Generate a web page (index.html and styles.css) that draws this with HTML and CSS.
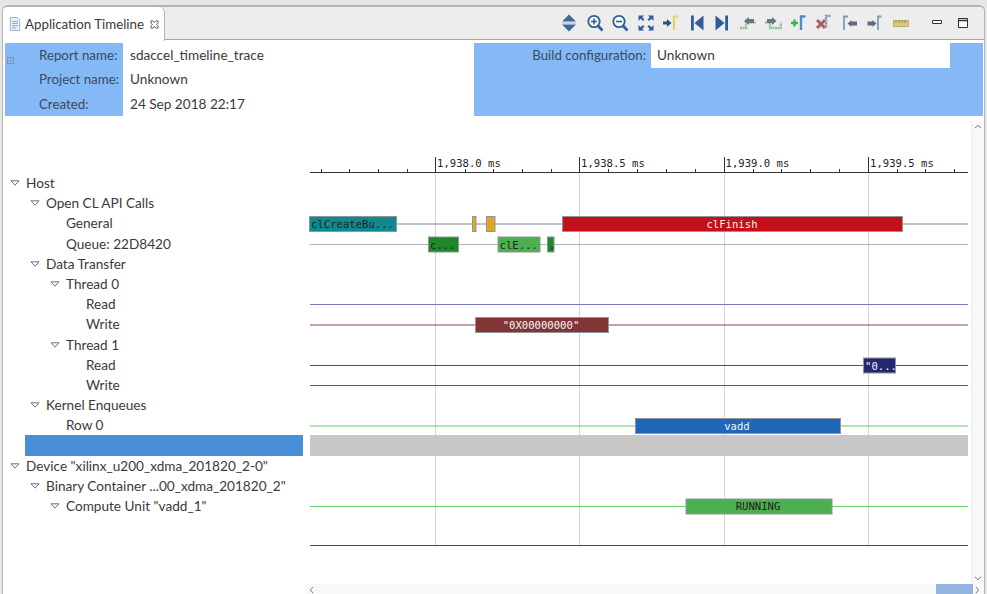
FILE: index.html
```html
<!DOCTYPE html>
<html lang="en">
<head>
  <meta charset="UTF-8">
  <title>Application Timeline</title>
  <meta name="viewport" content="width=device-width, initial-scale=1.0">
  <link rel="stylesheet" href="styles.css">
</head>
<body>
  <svg class="defs" width="0" height="0">
    <symbol id="twisty" viewBox="0 0 10 6">
      <path d="M1 .8H9L5 5.2Z" fill="#fff" stroke="#6f6f6f" stroke-width="1"/>
    </symbol>
  </svg>

  <div class="window">
    <div class="tabbar">
      <div class="tab">
        <svg class="tab-icon" viewBox="0 0 14 16"><path d="M1.5 .5H9.5L12.5 3.5V15.5H1.5Z" fill="#eef2fa" stroke="#8fa3c4"/><path d="M3.5 5H10.5M3.5 7.5H10.5M3.5 10H10.5M3.5 12.5H8.5" stroke="#7f93b8"/></svg>
        <span>Application Timeline</span>
        <svg class="tab-close" viewBox="0 0 10 10"><path d="M1 1H3.5L5 2.8 6.5 1H9V3.5L7.2 5 9 6.5V9H6.5L5 7.2 3.5 9H1V6.5L2.8 5 1 3.5Z" fill="#fff" stroke="#555" stroke-width="1"/></svg>
      </div>
      <div class="toolbar">
        <svg class="tool" viewBox="0 0 18 20"><path d="M9 1.5L16 8.5H2ZM9 18.5L2 11.5H16Z" fill="#41689b"/><path d="M2 10H16" stroke="#a9bbd3"/></svg>
        <svg class="tool" viewBox="0 0 18 20"><circle cx="8" cy="8.5" r="5.7" fill="#f4f7fb" stroke="#2f5d96" stroke-width="1.8"/><path d="M12.2 13L16.5 17.5" stroke="#2f5d96" stroke-width="2.6"/><path d="M8 5.5V11.5M5 8.5H11" stroke="#2f5d96" stroke-width="1.6"/></svg>
        <svg class="tool" viewBox="0 0 18 20"><circle cx="8" cy="8.5" r="5.7" fill="#f4f7fb" stroke="#2f5d96" stroke-width="1.8"/><path d="M12.2 13L16.5 17.5" stroke="#2f5d96" stroke-width="2.6"/><path d="M5 8.5H11" stroke="#2f5d96" stroke-width="1.6"/></svg>
        <svg class="tool" viewBox="0 0 18 20"><path d="M1.5 2.5H7L5.3 4.2 7.5 6.4 5.9 8 3.700 5.800 1.500 8ZM16.500 2.500H11L12.700 4.200 10.500 6.400 12.100 8 14.300 5.800 16.500 8ZM1.500 17.500H7L5.300 15.800 7.500 13.600 5.900 12 3.700 14.200 1.500 12ZM16.500 17.500H11L12.700 15.800 10.500 13.600 12.100 12 14.300 14.200 16.500 12Z" fill="#2f5d96"/></svg>
        <svg class="tool" viewBox="0 0 18 20"><path d="M1 8.500H5V6L9.500 10 5 14V11.500H1Z" fill="#2f4f7c"/><path d="M16 3.500H12V17" fill="none" stroke="#ecd067" stroke-width="2.200"/></svg>
        <svg class="tool" viewBox="0 0 18 20"><path d="M3 2.500H5.800V17.500H3ZM15.500 2.500V17.500L6.500 10Z" fill="#2f5d96"/></svg>
        <svg class="tool" viewBox="0 0 18 20"><path d="M15 2.500H12.200V17.500H15ZM2.500 2.500V17.500L11.500 10Z" fill="#2f5d96"/></svg>
        <svg class="tool" viewBox="0 0 18 20"><path d="M1 15H7V9.500H17" fill="none" stroke="#8fc49a" stroke-width="2.400" stroke-dasharray="2 .6"/><path d="M5 8L10 4V6H15V10H10V12Z" fill="#6a7482"/></svg>
        <svg class="tool" viewBox="0 0 18 20"><path d="M1 9.500H6V15H17V9.500" fill="none" stroke="#8fc49a" stroke-width="2.400" stroke-dasharray="2 .6"/><path d="M12.500 8L8 4V6H3V10H8V12Z" fill="#6a7482"/></svg>
        <svg class="tool" viewBox="0 0 18 20"><path d="M1 10H8M4.500 6.500V13.500" stroke="#3cb34a" stroke-width="2.400"/><path d="M15.500 3.500H11V17" fill="none" stroke="#4d8fc4" stroke-width="2.400"/></svg>
        <svg class="tool" viewBox="0 0 18 20"><path d="M2 7L10 15M10 7L2 15" stroke="#a8605f" stroke-width="3"/><path d="M15.500 3H11V15" fill="none" stroke="#7f9ab5" stroke-width="2.400" stroke-dasharray="2 .6"/></svg>
        <svg class="tool" viewBox="0 0 18 20"><path d="M7 3.500H3V17" fill="none" stroke="#7f9ab5" stroke-width="1.800"/><path d="M6.500 10.500L10.500 7V8.500H16V12.500H10.500V14Z" fill="#5c6a7c"/></svg>
        <svg class="tool" viewBox="0 0 18 20"><path d="M1.500 8.500H6.500V7L10.500 10.500 6.500 14V12.500H1.500Z" fill="#5c6a7c"/><path d="M15.500 3.500H12V17" fill="none" stroke="#7f9ab5" stroke-width="1.800"/></svg>
        <svg class="tool" viewBox="0 0 18 20"><path d="M1.500 7.500H16.500V13.500H1.500Z" fill="#d8ca84" stroke="#bfae66"/><path d="M4 7.500V10M7 7.500V10M10 7.500V10M13 7.500V10" stroke="#8c8048"/></svg>
        <div class="win-buttons">
          <svg class="win-btn" viewBox="0 0 12 12"><path d="M1.500 3.500H10.500V6.500H1.500Z" fill="#fff" stroke="#333" stroke-width="1"/></svg>
          <svg class="win-btn" viewBox="0 0 12 12"><path d="M1.500 1.500H10.500V10.500H1.500Z" fill="#fff" stroke="#333" stroke-width="1"/><path d="M1.500 3.500H10.500" stroke="#333" stroke-width="1.400"/></svg>
        </div>
      </div>
    </div>

    <div class="report">
      <div class="report-left">
        <span class="collapse"></span>
        <div class="field"><label>Report name:</label><span>sdaccel_timeline_trace</span></div>
        <div class="field"><label>Project name:</label><span>Unknown</span></div>
        <div class="field"><label>Created:</label><span>24 Sep 2018 22:17</span></div>
      </div>
      <div class="report-right">
        <label>Build configuration:</label>
        <span>Unknown</span>
      </div>
    </div>

    <div class="main">
      <div class="tree">
        <div class="row lvl-0"><svg class="arrow"><use href="#twisty"/></svg>Host</div>
        <div class="row lvl-1"><svg class="arrow"><use href="#twisty"/></svg>Open CL API Calls</div>
        <div class="row lvl-2 leaf">General</div>
        <div class="row lvl-2 leaf">Queue: 22D8420</div>
        <div class="row lvl-1"><svg class="arrow"><use href="#twisty"/></svg>Data Transfer</div>
        <div class="row lvl-2"><svg class="arrow"><use href="#twisty"/></svg>Thread 0</div>
        <div class="row lvl-3 leaf">Read</div>
        <div class="row lvl-3 leaf">Write</div>
        <div class="row lvl-2"><svg class="arrow"><use href="#twisty"/></svg>Thread 1</div>
        <div class="row lvl-3 leaf">Read</div>
        <div class="row lvl-3 leaf">Write</div>
        <div class="row lvl-1"><svg class="arrow"><use href="#twisty"/></svg>Kernel Enqueues</div>
        <div class="row lvl-2 leaf">Row 0</div>
        <div class="row selected"></div>
        <div class="row lvl-0"><svg class="arrow"><use href="#twisty"/></svg>Device "xilinx_u200_xdma_201820_2-0"</div>
        <div class="row lvl-1"><svg class="arrow"><use href="#twisty"/></svg>Binary Container ...00_xdma_201820_2"</div>
        <div class="row lvl-2"><svg class="arrow"><use href="#twisty"/></svg>Compute Unit "vadd_1"</div>
      </div>

      <div class="plot">
        <div class="plot-top">
          <svg class="chart" viewBox="306 121 665 461">
            <path class="grid" d="M435.500 172V545M579.500 172V545M724.500 172V545M868.500 172V545"/>

            <path class="axis" d="M310 172.500H968"/>
            <path class="axis" d="M435.500 157V172M579.500 157V172M724.500 157V172M868.500 157V172"/>
            <path class="axis" d="M321.500 169V172M349.500 169V172M378.500 169V172M407.500 169V172M465.500 169V172M493.500 169V172M522.500 169V172M551.500 169V172M608.500 169V172M637.500 169V172M666.500 169V172M695.500 169V172M753.500 169V172M781.500 169V172M810.500 169V172M839.500 169V172M897.500 169V172M925.500 169V172M954.500 169V172"/>
            <text class="mono" x="437" y="167">1,938.0 ms</text>
            <text class="mono" x="581" y="167">1,938.5 ms</text>
            <text class="mono" x="725.500" y="167">1,939.0 ms</text>
            <text class="mono" x="870" y="167">1,939.5 ms</text>

            <path class="track" stroke="#7d8a98" d="M310 224H968"/>
            <path class="track" stroke="#a9b4be" d="M310 244.500H968"/>
            <path class="track" stroke="#7b78b8" d="M310 304.500H968"/>
            <path class="track" stroke="#934040" d="M310 325H968"/>
            <path class="track" stroke="#4a4a90" d="M310 365.500H968"/>
            <path class="track" stroke="#8a4b4b" d="M310 385.500H968"/>
            <path class="track" stroke="#66cc66" d="M310 426H968"/>
            <path class="track" stroke="#66cc66" d="M310 506.500H968"/>
            <path class="track" stroke="#4a4a4a" d="M310 545.500H968"/>

            <rect x="310" y="435" width="658" height="21" fill="#c8c8c8"/>

            <rect class="bar" x="309.500" y="216.500" width="87" height="15" fill="#11898f"/>
            <text class="mono" x="311" y="228">clCreateBu...</text>
            <rect class="bar" x="472.500" y="216.500" width="3.500" height="15" fill="#dfa822"/>
            <rect class="bar" x="486.500" y="216.500" width="8.500" height="15" fill="#dfa822"/>
            <rect class="bar" x="562.500" y="216.500" width="340" height="15" fill="#c5101c"/>
            <text class="mono light mid" x="732" y="228">clFinish</text>

            <rect class="bar" x="428.500" y="237" width="30" height="15" fill="#21882a"/>
            <text class="mono" x="430" y="248.500">c...</text>
            <rect class="bar" x="498" y="237" width="42" height="15" fill="#4caf50"/>
            <text class="mono" x="499.500" y="248.500">clE...</text>
            <rect class="bar" x="547.500" y="237" width="6.500" height="15" fill="#21882a"/>
            <text class="mono" x="549" y="248.500">,</text>

            <rect class="bar" x="475.500" y="317.500" width="133" height="15" fill="#823437"/>
            <text class="mono light mid" x="541" y="329">"0X00000000"</text>

            <rect class="bar" x="863.500" y="358" width="32" height="15" fill="#26286f"/>
            <text class="mono light" x="865" y="369.500">"0...</text>

            <rect class="bar" x="635.500" y="418.500" width="205" height="15" fill="#1f66b8"/>
            <text class="mono light mid" x="737" y="429.500">vadd</text>

            <rect class="bar" x="686" y="499" width="146" height="15" fill="#4caf50"/>
            <text class="mono mid" x="758" y="510">RUNNING</text>
          </svg>
          <div class="vscroll">
            <svg class="scroll-arrow" viewBox="0 0 10 6"><path d="M1 5L5 1.500 9 5" fill="none" stroke="#777" stroke-width="1.200"/></svg>
            <svg class="scroll-arrow" viewBox="0 0 10 6"><path d="M1 1L5 4.500 9 1" fill="none" stroke="#777" stroke-width="1.200"/></svg>
          </div>
        </div>
        <div class="hscroll">
          <svg class="scroll-arrow side" viewBox="0 0 6 10"><path d="M5 1L1.500 5 5 9" fill="none" stroke="#777" stroke-width="1.200"/></svg>
          <div class="thumb"></div>
          <svg class="scroll-arrow side" viewBox="0 0 6 10"><path d="M1 1L4.500 5 1 9" fill="none" stroke="#777" stroke-width="1.200"/></svg>
        </div>
      </div>
    </div>
  </div>
</body>
</html>
```

FILE: styles.css
```css
html, body {
  margin: 0;
  height: 594px;
  overflow: hidden;
}
body {
  background: #e6e6e6;
  color: #3a3a3a;
  font-family: 'Lato', sans-serif;
  font-size: 13.600px;
}
.defs {
  position: absolute;
}
.window {
  margin: 5px 2px 0 2px;
  height: 589px;
  background: #fff;
  border: 2px solid #b4b4b4;
  border-bottom: none;
  border-width: 2px 1px 0 1px;
  border-radius: 6px 6px 0 0;
  display: flex;
  flex-direction: column;
  overflow: hidden;
}
.tabbar {
  display: flex;
  height: 33px;
  flex: none;
  background: #ededed;
}
.tab {
  width: 162px;
  background: #fff;
  border-right: 1px solid #b4b4b4;
  border-radius: 0 6px 0 0;
  display: flex;
  align-items: center;
  box-sizing: border-box;
  margin-bottom: -1px;
  position: relative;
  z-index: 1;
  padding-left: 6px;
  white-space: nowrap;
  font-size: 13.300px;
}
.tab-icon {
  width: 12px;
  height: 14px;
  margin-right: 4px;
  flex: none;
}
.tab-close {
  width: 9px;
  height: 9px;
  margin-left: 6px;
  flex: none;
}
.toolbar {
  flex: 1;
  display: flex;
  align-items: center;
  padding-left: 395px;
  border-bottom: 1px solid #a8a8a8;
}
.tool {
  width: 18px;
  height: 20px;
  margin-right: 7.500px;
  flex: none;
}
.win-buttons {
  display: flex;
  margin-left: 14px;
  gap: 14px;
}
.win-btn {
  width: 12px;
  height: 12px;
}

/* report header */
.report {
  display: flex;
  flex: none;
  height: 76px;
  padding: 3px 1px 0 2px;
  box-sizing: border-box;
}
.report-left {
  position: relative;
  width: 469px;
  background: linear-gradient(to right, #85b9f5 118px, #fff 118px);
  height: 73px;
}
.collapse {
  position: absolute;
  left: 2px;
  top: 14px;
  width: 5px;
  height: 5px;
  border: 1px solid #7b95b8;
  background: linear-gradient(#7b95b8, #7b95b8) center / 3px 1px no-repeat;
}
.field {
  display: flex;
  align-items: center;
  height: 24.500px;
  padding-bottom: 1px;
  box-sizing: border-box;
}
.field label {
  width: 118px;
  padding-left: 34px;
  box-sizing: border-box;
  color: #3d4a5c;
  white-space: nowrap;
  font-size: 13.300px;
}
.field span {
  margin-left: 7px;
}
.report-right {
  flex: 1;
  height: 73px;
  background: #85b9f5;
  display: flex;
  align-items: flex-start;
}
.report-right label {
  width: 172px;
  height: 25px;
  line-height: 24px;
  text-align: right;
  color: #3d4a5c;
  font-size: 13.300px;
}
.report-right span {
  margin-left: 5px;
  width: 293px;
  height: 25px;
  line-height: 24px;
  background: #fff;
  padding-left: 6px;
}

/* tree + chart */
.main {
  flex: 1;
  display: flex;
  min-height: 0;
}
.tree {
  width: 303px;
  flex: none;
  padding-top: 57px;
}
.row {
  height: 20.200px;
  line-height: 20.200px;
  white-space: nowrap;
  display: flex;
  align-items: center;
}
.arrow {
  width: 10px;
  height: 6px;
  margin-right: 6px;
  flex: none;
}
.lvl-0 { padding-left: 7px; }
.lvl-1 { padding-left: 27px; }
.lvl-2 { padding-left: 47px; }
.leaf.lvl-2 { padding-left: 63px; }
.leaf.lvl-3 { padding-left: 83px; }
.selected {
  background: #4a90d9;
  margin-left: 22px;
  width: 278px;
  height: 20.500px;
}
.plot {
  flex: 1;
  display: flex;
  flex-direction: column;
  padding-top: 5px;
  min-width: 0;
}
.plot-top {
  display: flex;
  flex: 1;
  min-height: 0;
}
.chart {
  width: 665px;
  height: 461px;
  flex: none;
  display: block;
}
.grid {
  stroke: #d4d4d4;
  stroke-width: 1;
  fill: none;
}
.axis {
  stroke: #333;
  stroke-width: 1;
  fill: none;
}
.track {
  stroke-width: 1;
  fill: none;
}
.bar {
  stroke: #8f9699;
  stroke-width: 1;
}
.mono {
  font-family: 'DejaVu Sans Mono', monospace;
  font-size: 10.600px;
  fill: #222;
}
.light {
  fill: #f4f4f4;
}
.mid {
  text-anchor: middle;
}
.vscroll {
  width: 14px;
  background: #f8f8f8;
  border-left: 1px solid #efefef;
  display: flex;
  flex-direction: column;
  justify-content: space-between;
  align-items: center;
  padding: 3px 0;
  box-sizing: border-box;
}
.scroll-arrow {
  width: 8px;
  height: 5px;
}
.scroll-arrow.side {
  width: 5px;
  height: 8px;
  flex: none;
}
.hscroll {
  height: 12px;
  flex: none;
  background: #f8f8f8;
  display: flex;
  align-items: center;
  padding-left: 3px;
}
.thumb {
  width: 37px;
  height: 12px;
  background: #94b4e0;
  margin-left: 622px;
  margin-right: 2px;
}
```
